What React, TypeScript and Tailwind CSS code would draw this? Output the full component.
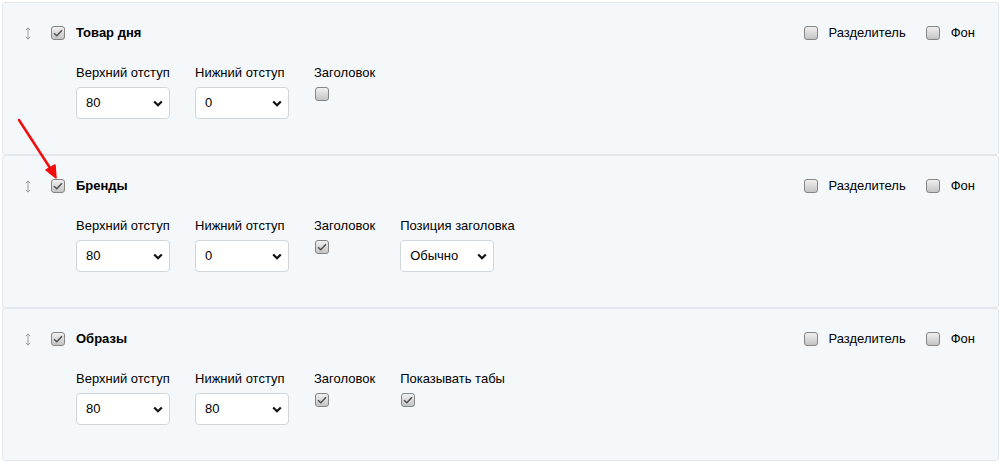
import React from 'react';

type Field =
	| { kind: 'select'; label: string; value: string }
	| { kind: 'check'; label: string; checked: boolean };

type Block = { title: string; checked: boolean; fields: Field[] };

const BLOCKS: Block[] = [
	{
		title: 'Товар дня',
		checked: true,
		fields: [
			{ kind: 'select', label: 'Верхний отступ', value: '80' },
			{ kind: 'select', label: 'Нижний отступ', value: '0' },
			{ kind: 'check', label: 'Заголовок', checked: false },
		],
	},
	{
		title: 'Бренды',
		checked: true,
		fields: [
			{ kind: 'select', label: 'Верхний отступ', value: '80' },
			{ kind: 'select', label: 'Нижний отступ', value: '0' },
			{ kind: 'check', label: 'Заголовок', checked: true },
			{ kind: 'select', label: 'Позиция заголовка', value: 'Обычно' },
		],
	},
	{
		title: 'Образы',
		checked: true,
		fields: [
			{ kind: 'select', label: 'Верхний отступ', value: '80' },
			{ kind: 'select', label: 'Нижний отступ', value: '80' },
			{ kind: 'check', label: 'Заголовок', checked: true },
			{ kind: 'check', label: 'Показывать табы', checked: true },
		],
	},
];

function Check({ checked }: { checked: boolean }) {
	return (
		<span className="flex h-[14px] w-[14px] shrink-0 items-center justify-center rounded-[3px] border border-[#858585] bg-gradient-to-b from-[#f0f0f0] to-[#c4c4c4]">
			{checked && (
				<svg width="10" height="8" viewBox="0 0 10 8" fill="none">
					<path d="M1 4.2 L3.8 6.8 L9 1.2" stroke="#505050" strokeWidth="1.5" />
				</svg>
			)}
		</span>
	);
}

function DragHandle() {
	return (
		<svg width="6" height="13" viewBox="0 0 6 13" fill="none" className="text-[#9a9a9a]">
			<path d="M3 1 V12" stroke="currentColor" strokeWidth="1" />
			<path d="M0.8 3.2 L3 0.8 L5.2 3.2" stroke="currentColor" strokeWidth="1" />
			<path d="M0.8 9.8 L3 12.2 L5.2 9.8" stroke="currentColor" strokeWidth="1" />
		</svg>
	);
}

function FakeSelect({ value }: { value: string }) {
	return (
		<div className="flex h-[32px] w-[94px] items-center justify-between rounded-[4px] border border-[#cfd6dc] bg-white pl-[9px] pr-[6px] text-[13px] text-black">
			<span>{value}</span>
			<svg width="10" height="7" viewBox="0 0 10 7" fill="none">
				<path d="M1.2 1.5 L5 5.2 L8.8 1.5" stroke="#111" strokeWidth="2.2" />
			</svg>
		</div>
	);
}

function BlockCard({ block }: { block: Block }) {
	return (
		<div className="h-[153px] rounded-[3px] border border-[#e1e7ec] bg-[#f5f8fa] pl-[21px] pr-[23px] pt-[20px]">
			<div className="flex h-[20px] items-center">
				<div className="flex w-[27px] justify-start pl-[1px]">
					<DragHandle />
				</div>
				<Check checked={block.checked} />
				<span className="ml-[11px] text-[13px] font-bold text-black">{block.title}</span>
				<div className="ml-auto flex items-center">
					<Check checked={false} />
					<span className="ml-[11px] text-[13px] text-black">Разделитель</span>
					<span className="ml-[20px] flex items-center">
						<Check checked={false} />
					</span>
					<span className="ml-[11px] text-[13px] text-black">Фон</span>
				</div>
			</div>
			<div className="mt-[22px] flex gap-[25px] pl-[52px]">
				{block.fields.map((f, i) => (
					<div key={i} className="flex flex-col">
						<span className="h-[16px] whitespace-nowrap text-[13px] leading-[16px] text-black">{f.label}</span>
						<div className="mt-[6px]">
							{f.kind === 'select' ? (
								<FakeSelect value={f.value} />
							) : (
								<span className="ml-[1px] flex">
									<Check checked={f.checked} />
								</span>
							)}
						</div>
					</div>
				))}
			</div>
		</div>
	);
}

export default function App() {
	return (
		<div
			className="relative min-h-[461px] bg-white pl-[2px] pr-[1px] pt-[2px]"
			style={{ fontFamily: '"Liberation Sans", Arial, sans-serif' }}
		>
			<div className="flex flex-col">
				{BLOCKS.map((b, i) => (
					<BlockCard key={i} block={b} />
				))}
			</div>
			{/* annotation arrow */}
			<svg className="pointer-events-none absolute left-0 top-0" width="80" height="200" viewBox="0 0 80 200">
				<path d="M19 120 L52 171" stroke="#f20d0d" strokeWidth="2.5" strokeLinecap="round" />
				<path d="M46 170 L56 178 L55 165 Z" fill="#f20d0d" stroke="#f20d0d" strokeWidth="1.5" strokeLinejoin="round" />
			</svg>
		</div>
	);
}
